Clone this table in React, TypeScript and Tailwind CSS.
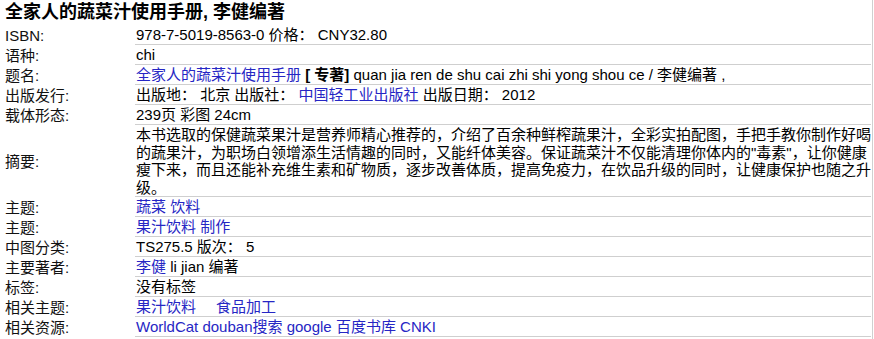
import type { ReactNode } from 'react';

const font = 'font-["Liberation_Sans","Noto_Sans_CJK_SC",sans-serif]';

function A({ children }: { children: ReactNode }) {
  return <a className="text-[#2626c4]">{children}</a>;
}

function Row({ label, children, tall }: { label: string; children: ReactNode; tall?: boolean }) {
  return (
    <div className={tall ? 'flex h-[72px]' : 'flex h-[20px]'}>
      <div className="w-[135px] shrink-0 flex items-center pl-[5px] leading-[19px] text-[#111]">{label}:</div>
      <div
        className={
          tall
            ? 'w-[736px] border-b border-[#cfcfcf] pl-px leading-[17.5px] pt-[1px]'
            : 'w-[736px] border-b border-[#cfcfcf] pl-px leading-[19px] whitespace-nowrap'
        }>
        {children}
      </div>
    </div>
  );
}

export default function App() {
  return (
    <div className={`${font} w-[873px] h-[339px] overflow-hidden bg-white border-r border-[#d0d0d0] text-[15px] text-black`}>
      <h1 className="h-[25px] pl-[5px] pt-[1px] text-[18px] leading-[22px] font-bold">
        全家人的蔬菜汁使用手册, 李健编著
      </h1>

      <Row label="ISBN">978-7-5019-8563-0 价格： CNY32.80</Row>
      <Row label="语种">chi</Row>
      <Row label="题名">
        <A>全家人的蔬菜汁使用手册</A> <b>[ 专著]</b> quan jia ren de shu cai zhi shi yong shou ce / 李健编著 ,
      </Row>
      <Row label="出版发行">
        出版地： 北京 出版社： <A>中国轻工业出版社</A> 出版日期： 2012
      </Row>
      <Row label="载体形态">239页 彩图 24cm</Row>
      <Row label="摘要" tall>
        本书选取的保健蔬菜果汁是营养师精心推荐的，介绍了百余种鲜榨蔬果汁，全彩实拍配图，手把手教你制作好喝的蔬果汁，为职场白领增添生活情趣的同时，又能纤体美容。保证蔬菜汁不仅能清理你体内的"毒素"，让你健康瘦下来，而且还能补充维生素和矿物质，逐步改善体质，提高免疫力，在饮品升级的同时，让健康保护也随之升级。
      </Row>
      <Row label="主题">
        <A>蔬菜</A> <A>饮料</A>
      </Row>
      <Row label="主题">
        <A>果汁饮料</A> <A>制作</A>
      </Row>
      <Row label="中图分类">TS275.5 版次： 5</Row>
      <Row label="主要著者">
        <A>李健</A> li jian 编著
      </Row>
      <Row label="标签">没有标签</Row>
      <Row label="相关主题">
        <A>果汁饮料</A>
        <span className="inline-block w-[20px]" />
        <A>食品加工</A>
      </Row>
      <Row label="相关资源">
        <A>WorldCat</A> <A>douban搜索</A> <A>google</A> <A>百度书库</A> <A>CNKI</A>
      </Row>
    </div>
  );
}
